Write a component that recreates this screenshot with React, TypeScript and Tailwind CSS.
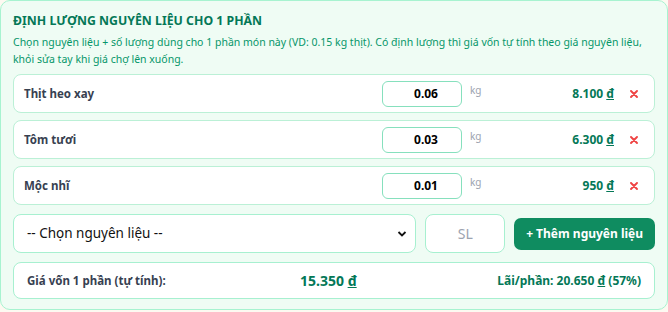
import React from "react";

const rows = [
  { name: "Thịt heo xay", qty: "0.06", price: "8.100" },
  { name: "Tôm tươi", qty: "0.03", price: "6.300" },
  { name: "Mộc nhĩ", qty: "0.01", price: "950" },
];

export default function App() {
  return (
    <div className="w-[668px] h-[312px] bg-[#fdf9f1] font-['Noto_Sans',sans-serif]">
      <div className="h-[310px] border border-[#a7f3d0] bg-[#effcf4] rounded-[10px] px-3 pt-[10px]">
        <div className="text-[12.3px] font-bold text-[#047857] leading-[18px] mt-[1px]">ĐỊNH LƯỢNG NGUYÊN LIỆU CHO 1 PHẦN</div>
        <div className="text-[10.5px] text-[#059669] leading-[17px] mt-[4px]">
          Chọn nguyên liệu + số lượng dùng cho 1 phần món này (VD: 0.15 kg thịt). Có định lượng thì giá vốn tự tính theo giá nguyên liệu, khỏi sửa tay khi giá chợ lên xuống.
        </div>
        <div className="flex flex-col gap-[7px] mt-[6px]">
          {rows.map((r) => (
            <div key={r.name} className="h-[39px] bg-white border border-[#bbf0d6] rounded-[8px] flex items-center pl-[10px] pr-[16px]">
              <div className="flex-1 text-[11.5px] font-bold text-[#374151]">{r.name}</div>
              <div className="w-[80px] h-[26px] border border-[#86e0bd] rounded-[6px] flex items-center justify-center text-[12px] font-bold text-black pl-[8px]">
                {r.qty}
              </div>
              <div className="w-[42px] pl-[8px] text-[10px] text-[#9ca3af] -mt-[6px]">kg</div>
              <div className="w-[110px] text-right text-[12px] font-bold text-[#047857]">
                {r.price} <span className="underline">đ</span>
              </div>
              <div className="w-[24px] flex justify-end">
                <svg width="8" height="8" viewBox="0 0 8 8">
                  <path d="M1 1 L7 7 M7 1 L1 7" stroke="#ef4444" strokeWidth="1.9" strokeLinecap="round" />
                </svg>
              </div>
            </div>
          ))}
        </div>
        <div className="flex items-center mt-[9px] gap-[9px]">
          <div className="w-[404px] h-[39px] bg-white border border-[#a7f0d0] rounded-[8px] flex items-center pl-[13px] pr-[8px]">
            <span className="flex-1 text-[13.5px] text-[#111]">-- Chọn nguyên liệu --</span>
            <svg width="10" height="8" viewBox="0 0 10 8"><path d="M1.5 2 L5 5.5 L8.5 2" fill="none" stroke="#111" strokeWidth="1.8" /></svg>
          </div>
          <div className="w-[80px] h-[39px] bg-white border border-[#a7f0d0] rounded-[8px] flex items-center justify-center text-[14px] text-[#9ca3af]">SL</div>
          <div className="w-[141px] h-[32px] bg-[#0f8c60] rounded-[7px] flex items-center justify-center text-[12px] font-bold text-white">+ Thêm nguyên liệu</div>
        </div>
        <div className="mt-[9px] h-[37px] bg-white border border-[#a7f0d0] rounded-[8px] flex items-center pl-[13px] pr-[13px]">
          <div className="w-[273px] text-[11.5px] font-bold text-[#374151]">Giá vốn 1 phần (tự tính):</div>
          <div className="flex-1 text-[14px] font-bold text-[#047857]">15.350 <span className="underline">đ</span></div>
          <div className="text-[12px] font-bold text-[#047857]">Lãi/phần: 20.650 <span className="underline">đ</span> (57%)</div>
        </div>
      </div>
    </div>
  );
}
